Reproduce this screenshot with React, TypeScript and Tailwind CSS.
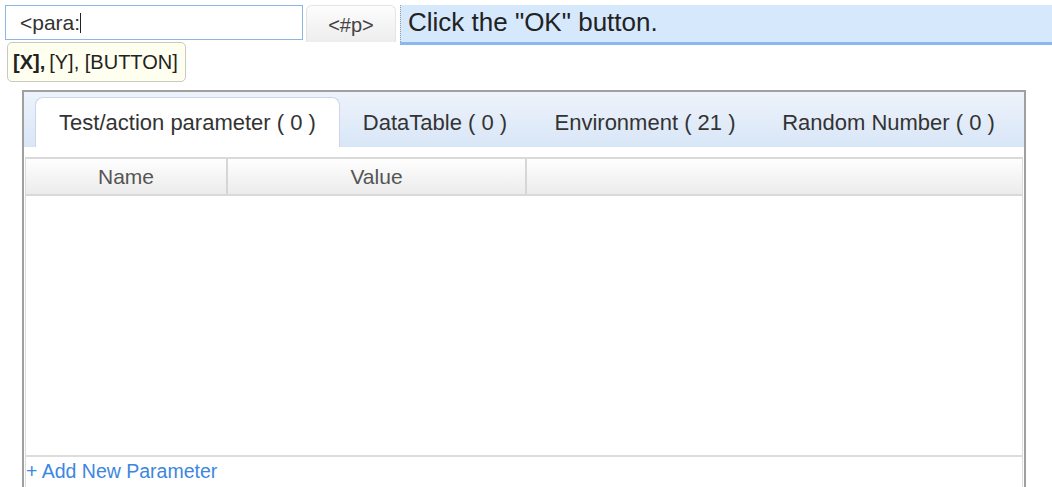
const tabs = [
  { label: 'Test/action parameter ( 0 )', width: 'w-[305px]', active: true },
  { label: 'DataTable ( 0 )', width: 'w-[190px]' },
  { label: 'Environment ( 21 )', width: 'w-[230px]' },
  { label: 'Random Number ( 0 )', width: 'w-[257px]' },
]

const sans = "font-['Liberation_Sans',Arial,sans-serif]"

export default function App() {
  return (
    <div className={`relative w-[1052px] h-[487px] overflow-hidden bg-white ${sans}`}>
      {/* Step editor row */}
      <div className="flex items-start pt-[5px] pl-[5px]">
        <div className="w-[298px] h-[35px] border border-[#8db6e4] bg-white flex items-center pl-[14px] text-[21px] text-[#333]">
          <span>&lt;para:</span>
          <span className="w-px h-[20px] bg-[#222]" />
        </div>
        <div className="ml-[3px] w-[90px] h-[37px] rounded-t-[6px] border border-[#e4e4e4] border-b-0 bg-gradient-to-b from-[#fdfdfd] to-[#ededed] flex items-end justify-center pb-[2px] text-[20px] text-[#444]">
          &lt;#p&gt;
        </div>
        <div className="ml-[4px] flex-1 h-[40px] border-b-[3px] border-[#8ab8ee]">
          <div className="h-full bg-[#d5e8fc] border-l border-dotted border-[#9a9a9a] flex items-center pl-[7px] pb-[2px] text-[26px] text-[#222]">
            Click the "OK" button.
          </div>
        </div>
      </div>

      {/* Autocomplete hint */}
      <div className="absolute left-[7px] top-[42px] w-[179px] h-[40px] rounded-[5px] border border-[#c9c9bf] bg-[#fffff0] flex items-center pl-[5px] text-[20px] text-[#222]">
        <span className="font-bold">[X],</span>
        <span className="ml-[4px]">[Y], [BUTTON]</span>
      </div>

      {/* Parameters panel */}
      <div className="mt-[45px] ml-[22px] w-[1004px] border-2 border-b-0 border-[#a0a0a0] bg-white">
        <div className="h-[55px] bg-gradient-to-b from-[#eef3fb] to-[#d8e6f7] flex items-end pl-[11px]">
          {tabs.map((t) =>
            t.active ? (
              <div
                key={t.label}
                className={`${t.width} h-[50px] rounded-t-[8px] border border-b-0 border-[#cbd7e6] bg-white flex items-center justify-center text-[22px] text-[#333]`}
              >
                {t.label}
              </div>
            ) : (
              <div key={t.label} className={`${t.width} h-[50px] flex items-center justify-center text-[22px] text-[#333]`}>
                {t.label}
              </div>
            ),
          )}
        </div>

        <div className="h-[10px]" />

        <div className="mx-px border-x border-[#dcdcdc]">
          <div className="h-[39px] flex border-y-2 border-[#d9d9d9] bg-gradient-to-b from-[#fefefe] to-[#ececec] text-[21px] text-[#555]">
            <div className="w-[202px] border-r-2 border-[#d6d6d6] flex items-center justify-center">Name</div>
            <div className="w-[299px] border-r-2 border-[#d6d6d6] flex items-center justify-center">Value</div>
            <div className="flex-1" />
          </div>
          <div className="h-[261px] border-b-2 border-[#dcdcdc]" />
          <div className="h-[30px] flex items-center text-[19.5px] text-[#3d86e0]">+ Add New Parameter</div>
        </div>
      </div>
    </div>
  )
}
